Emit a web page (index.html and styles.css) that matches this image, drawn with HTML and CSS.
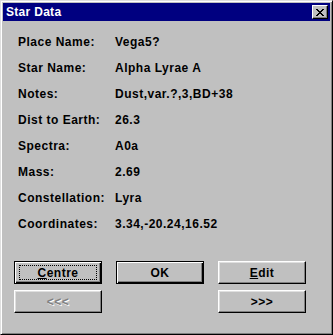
FILE: index.html
```html
<!DOCTYPE html>
<html lang="en">
<head>
    <meta charset="UTF-8">
    <meta name="viewport" content="width=device-width, initial-scale=1.0">
    <title>Star Data</title>
    <link rel="stylesheet" href="styles.css">
</head>
<body>
    <div class="window">
        <div class="title-bar">
            <span class="title">Star Data</span>
            <span class="close-btn">
                <svg width="8" height="7" viewBox="0 0 8 7">
                    <path d="M0 0h2v1h1v1h2v-1h1v-1h2v1h-1v1h-1v1h-1v1h1v1h1v1h1v1h-2v-1h-1v-1h-2v1h-1v1h-2v-1h1v-1h1v-1h1v-1h-1v-1h-1v-1h-1z" fill="#000"/>
                </svg>
            </span>
        </div>

        <div class="fields">
            <div class="label">Place Name:</div>
            <div class="value">Vega5?</div>

            <div class="label">Star Name:</div>
            <div class="value">Alpha Lyrae A</div>

            <div class="label">Notes:</div>
            <div class="value">Dust,var.?,3,BD+38</div>

            <div class="label">Dist to Earth:</div>
            <div class="value">26.3</div>

            <div class="label">Spectra:</div>
            <div class="value">A0a</div>

            <div class="label">Mass:</div>
            <div class="value">2.69</div>

            <div class="label">Constellation:</div>
            <div class="value">Lyra</div>

            <div class="label">Coordinates:</div>
            <div class="value">3.34,-20.24,16.52</div>
        </div>

        <div class="buttons">
            <button class="btn default focused"><span class="focus-ring"><u>C</u>entre</span></button>
            <button class="btn default">OK</button>
            <button class="btn"><u>E</u>dit</button>
            <button class="btn" disabled>&lt;&lt;&lt;</button>
            <span></span>
            <button class="btn">&gt;&gt;&gt;</button>
        </div>
    </div>
</body>
</html>
```

FILE: styles.css
```css
* {
    box-sizing: border-box;
}
body {
    margin: 0;
    font-family: "Liberation Sans", Arial, sans-serif;
    font-size: 12px;
    font-weight: bold;
    background: #c0c0c0;
}
.window {
    width: 333px;
    height: 335px;
    background: #c0c0c0;
    border: 1px solid;
    border-color: #dfdfdf #000 #000 #dfdfdf;
    box-shadow: inset 1px 1px #fff, inset -1px -1px #808080;
    padding: 2px;
}
.title-bar {
    height: 18px;
    background: #000080;
    color: #fff;
    display: flex;
    align-items: center;
    justify-content: space-between;
    padding: 0 2px 0 3px;
}
.title {
    font-size: 12px;
    font-weight: bold;
    letter-spacing: 0.3px;
}
.close-btn {
    width: 16px;
    height: 14px;
    background: #c0c0c0;
    border: 1px solid;
    border-color: #fff #000 #000 #fff;
    box-shadow: inset -1px -1px #808080;
    display: flex;
    align-items: center;
    justify-content: center;
}
.fields {
    display: grid;
    grid-template-columns: 97px auto;
    grid-auto-rows: 26px;
    line-height: 26px;
    letter-spacing: 0.5px;
    padding: 8px 0 0 15px;
    color: #000;
}
.buttons {
    display: grid;
    grid-template-columns: 88px 88px 88px;
    column-gap: 14px;
    row-gap: 6px;
    margin-top: 24px;
    padding-left: 11px;
}
.btn {
    height: 23px;
    font-family: "Liberation Sans", Arial, sans-serif;
    font-size: 12px;
    font-weight: bold;
    letter-spacing: 0.5px;
    color: #000;
    background: #c0c0c0;
    border: 1px solid;
    border-color: #fff #000 #000 #fff;
    box-shadow: inset -1px -1px #808080, inset 1px 1px #dfdfdf;
    padding: 0;
    display: flex;
    align-items: center;
    justify-content: center;
}
.btn.default {
    border: 1px solid #000;
    box-shadow: inset 1px 1px #fff, inset -1px -1px #000, inset -2px -2px #808080;
}
.focus-ring {
    display: flex;
    align-items: center;
    justify-content: center;
    width: 78px;
    height: 15px;
    border: 1px dotted #000;
}
.btn:disabled {
    color: #808080;
    text-shadow: 1px 1px #fff;
}
u {
    text-decoration: underline;
}
```
